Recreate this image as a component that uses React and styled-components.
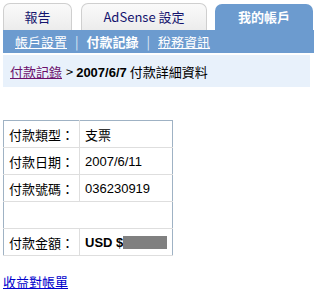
import styled, { createGlobalStyle } from "styled-components"

const Global = createGlobalStyle`
    body {
        margin: 0;
        background: #fff;
        font-family: "Noto Sans CJK TC", "Liberation Sans", sans-serif;
        font-size: 13px;
        color: #000;
    }
`;

const Page = styled.div`
    width: 314px;
    padding: 3px 0 0 3px;
    box-sizing: border-box;
`;

const Tabs = styled.div`
    display: flex;
    align-items: flex-end;
    height: 27px;
`;

const Tab = styled.div`
    width: ${p => p.w}px;
    margin-right: ${p => p.gap || 0}px;
    height: ${p => (p.active ? 26 : 27)}px;
    box-sizing: border-box;
    display: flex;
    align-items: center;
    justify-content: center;
    border-radius: 7px 7px 0 0;
    font-size: 13px;
    background: ${p => (p.active ? "#6c9bcf" : "linear-gradient(#fafafa, #ececec)")};
    border: ${p => (p.active ? "none" : "1px solid #cfcfcf")};
    border-bottom: none;
    color: ${p => (p.active ? "#fff" : "#14146e")};
    font-weight: ${p => (p.active ? "bold" : "normal")};
    padding-bottom: 2px;
`;

const NavBar = styled.div`
    background: #6c9bcf;
    height: 23px;
    display: flex;
    align-items: center;
    padding-left: 12px;
    gap: 8px;
    color: #fff;
    font-size: 13px;
`;

const NavLink = styled.a`
    color: #fff;
    font-weight: ${p => (p.current ? "bold" : "normal")};
    text-decoration: ${p => (p.current ? "none" : "underline")};
`;

const Sep = styled.span`
    color: #dfe9f5;
`;

const Crumbs = styled.div`
    margin-top: 2px;
    margin-right: 4px;
    background: #e8f1fb;
    height: 32px;
    display: flex;
    align-items: center;
    padding-left: 7px;
    font-size: 13px;
`;

const Visited = styled.a`
    color: #6b0f6b;
    text-decoration: underline;
    margin-right: 4px;
`;

const Date = styled.b`
    font-family: "Liberation Sans", sans-serif;
`;

const Table = styled.table`
    margin-top: 33px;
    width: 170px;
    border-collapse: collapse;
    border: 1px solid #9fb2c4;
    font-size: 13px;
`;

const Label = styled.td`
    width: 70px;
    height: 26px;
    padding: 0 0 0 5px;
    border-right: ${p => (p.blank ? "none" : "1px solid #dedede")};
    border-bottom: 1px solid #dedede;
    white-space: nowrap;
`;

const Value = styled.td`
    padding: 0 0 0 5px;
    border-bottom: 1px solid #dedede;
    font-family: ${p => (p.latin ? '"Liberation Sans", sans-serif' : "inherit")};
    font-weight: ${p => (p.bold ? "bold" : "normal")};
    white-space: nowrap;
`;

const Hidden = styled.span`
    display: inline-block;
    width: 44px;
    height: 13px;
    background: #808080;
    vertical-align: -2px;
`;

const Footer = styled.a`
    display: inline-block;
    margin-top: 16px;
    color: #0000cc;
    text-decoration: underline;
    font-size: 13px;
`;

const App = () => {
    return (
        <Page>
            <Global />
            <Tabs>
                <Tab w={69} gap={9}>報告</Tab>
                <Tab w={126} gap={8}>AdSense 設定</Tab>
                <Tab w={98} active>我的帳戶</Tab>
            </Tabs>
            <NavBar>
                <NavLink>帳戶設置</NavLink>
                <Sep>|</Sep>
                <NavLink current>付款記錄</NavLink>
                <Sep>|</Sep>
                <NavLink>稅務資訊</NavLink>
            </NavBar>
            <Crumbs>
                <Visited>付款記錄</Visited>
                <span>&gt; <Date>2007/6/7</Date> 付款詳細資料</span>
            </Crumbs>
            <Table>
                <tbody>
                    <tr><Label>付款類型：</Label><Value>支票</Value></tr>
                    <tr><Label>付款日期：</Label><Value latin>2007/6/11</Value></tr>
                    <tr><Label>付款號碼：</Label><Value latin>036230919</Value></tr>
                    <tr><Label blank></Label><Value></Value></tr>
                    <tr><Label>付款金額：</Label><Value latin bold>USD $<Hidden /></Value></tr>
                </tbody>
            </Table>
            <Footer>收益對帳單</Footer>
        </Page>
    )
};

export default App
